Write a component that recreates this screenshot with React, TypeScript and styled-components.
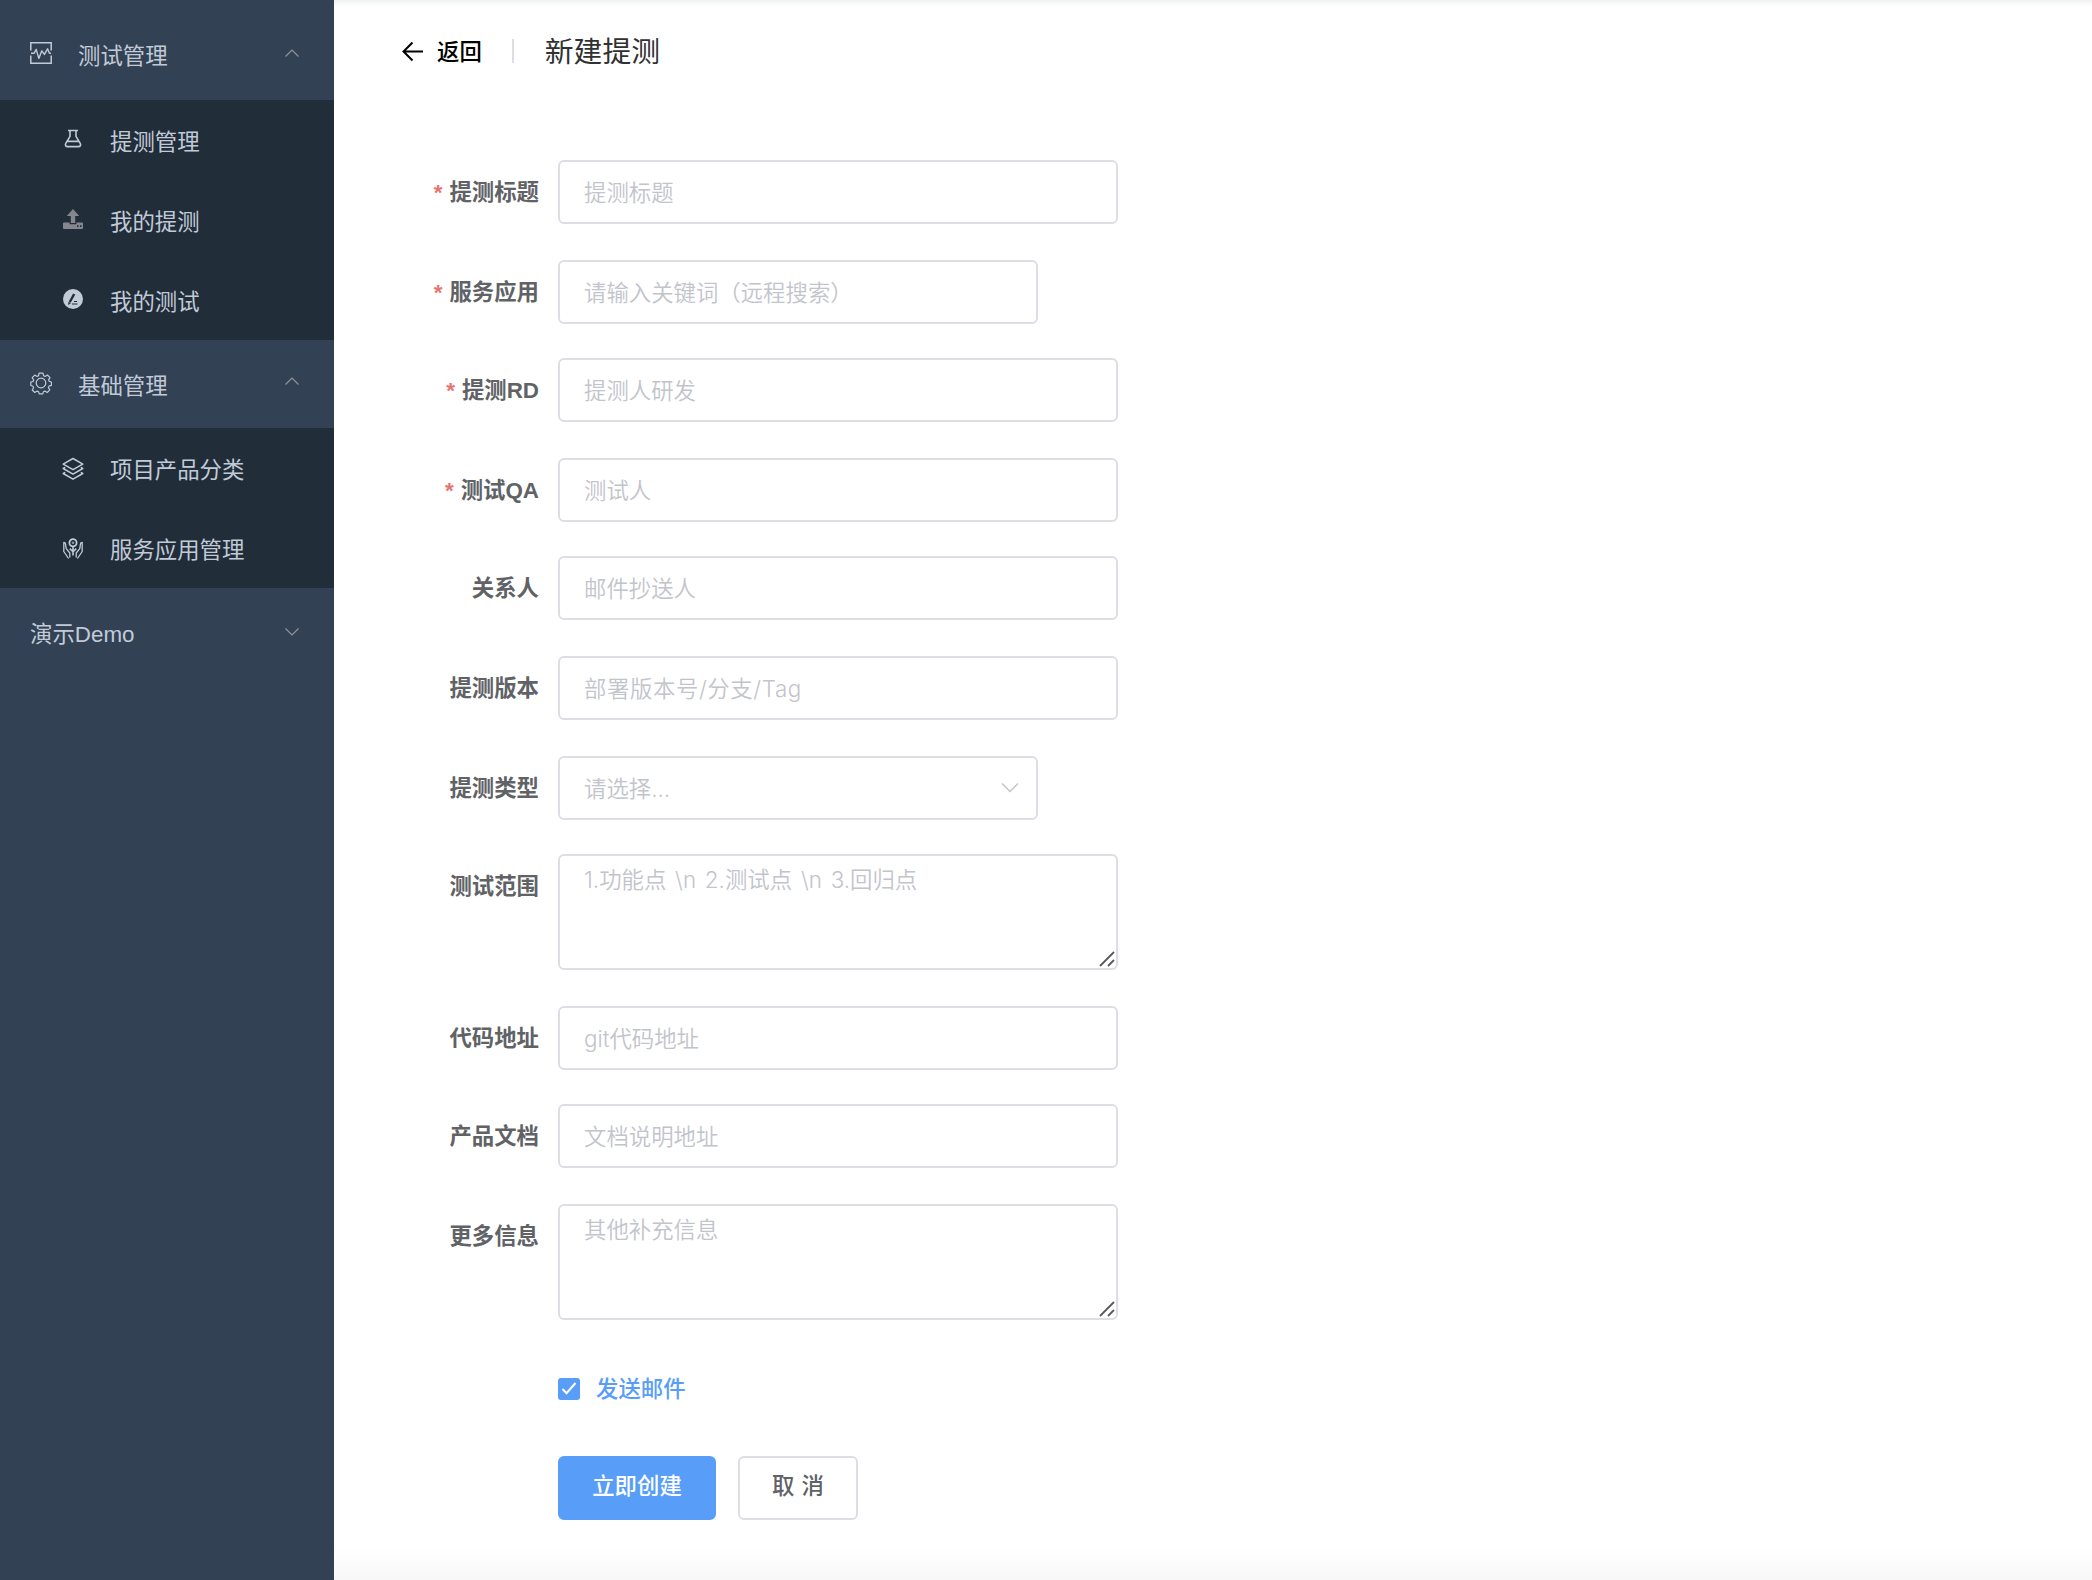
import type { ReactNode } from "react";
import styled, { createGlobalStyle } from "styled-components";

const GlobalStyle = createGlobalStyle`
  * {
    box-sizing: border-box;
  }
  body {
    margin: 0;
    background-color: #ffffff;
    font-family: "Liberation Sans", "Noto Sans CJK SC", sans-serif;
    font-size: 22.4px;
    color: #606266;
  }
`;

const Layout = styled.div`
  display: flex;
  height: 1580px;
  overflow: hidden;
`;

const Sidebar = styled.nav`
  width: 334px;
  flex-shrink: 0;
  padding-top: 12px;
  background-color: #334154;
  color: #c1cbd8;
`;

const GroupTitle = styled.div<{ $plain?: boolean }>`
  display: flex;
  align-items: center;
  height: 88px;
  padding: 0 34px 0 ${(p) => (p.$plain ? 30 : 28)}px;
  cursor: pointer;
`;

const SubMenu = styled.div`
  background-color: #222d3a;
`;

const MenuItem = styled.div`
  display: flex;
  align-items: center;
  height: 80px;
  padding-left: 60px;
  cursor: pointer;
  &:hover {
    background-color: #1b2430;
  }
`;

const IconBox = styled.span<{ $lift?: number }>`
  display: flex;
  width: 26px;
  margin-right: 24px;
  margin-bottom: ${(p) => p.$lift ?? 4}px;
`;

const MenuText = styled.span<{ $drop?: number }>`
  flex: 1;
  line-height: 30px;
  padding-top: ${(p) => p.$drop ?? 6}px;
`;

const Chevron = styled.svg<{ $lift: number }>`
  width: 16px;
  height: 10px;
  margin-bottom: ${(p) => p.$lift}px;
  stroke: #909399;
  stroke-width: 1.2;
  fill: none;
`;

const Main = styled.main`
  flex: 1;
  background:
    linear-gradient(to bottom, #f0f2f2, rgba(255, 255, 255, 0)) top / 100% 7px no-repeat,
    linear-gradient(to bottom, rgba(255, 255, 255, 0), #f8f8f8) bottom / 100% 36px no-repeat,
    #ffffff;
`;

const PageHeader = styled.header`
  display: flex;
  align-items: center;
  height: 104px;
  padding-left: 66px;
`;

const Back = styled.div`
  display: flex;
  align-items: center;
  gap: 13px;
  color: #000000;
  cursor: pointer;
`;

const BackText = styled.span`
  padding-bottom: 4px;
  font-weight: 500;
`;

const Divider = styled.span`
  width: 2px;
  height: 24px;
  margin: 0 31px 2px 30px;
  background-color: #dddee4;
`;

const Title = styled.h1`
  margin: 0;
  font-size: 28.8px;
  font-weight: 400;
  line-height: 40px;
  color: #303133;
`;

const Form = styled.form`
  padding-top: 56px;
`;

const Row = styled.div<{ $gap: number }>`
  display: flex;
  margin-bottom: ${(p) => p.$gap}px;
`;

const Label = styled.label<{ $required?: boolean }>`
  width: 224px;
  height: 64px;
  padding: 1px 19px 0 0;
  line-height: 64px;
  text-align: right;
  font-weight: 700;
  white-space: nowrap;
  &::before {
    content: ${(p) => (p.$required ? '"*"' : "none")};
    margin-right: 7px;
    color: #e47470;
  }
`;

const Field = styled.div<{ $width?: number }>`
  display: flex;
  align-items: center;
  width: ${(p) => p.$width ?? 560}px;
  height: 64px;
  padding-right: 17px;
  border: 2px solid #dddee4;
  border-radius: 6px;
  background-color: #ffffff;
`;

const Input = styled.input<{ $spacing?: number }>`
  flex: 1;
  min-width: 0;
  height: 60px;
  padding: 0 0 0 24px;
  border: none;
  outline: none;
  background: none;
  font-family: Inter, "Noto Sans CJK SC", sans-serif;
  font-size: 22.4px;
  letter-spacing: ${(p) => p.$spacing ?? 0}px;
  color: #606266;
  &::placeholder {
    color: #c2c4cb;
    font-weight: 350;
  }
`;

const TextAreaBox = styled.div`
  position: relative;
  width: 560px;
  height: 116px;
`;

const TextArea = styled.textarea`
  display: block;
  width: 100%;
  height: 100%;
  padding: 7px 24px;
  border: 2px solid #dddee4;
  border-radius: 6px;
  outline: none;
  resize: none;
  font-family: Inter, "Noto Sans CJK SC", sans-serif;
  font-size: 22.4px;
  line-height: 33.6px;
  word-spacing: 2.5px;
  &::placeholder {
    color: #c2c4cb;
    font-weight: 350;
  }
`;

const Grip = styled.svg`
  position: absolute;
  right: 3px;
  bottom: 3px;
  width: 16px;
  height: 16px;
  stroke: #5a5a5a;
  stroke-width: 1.8;
`;

const CheckRow = styled.div`
  display: flex;
  align-items: center;
  gap: 16px;
  height: 64px;
  margin: 37px 0 35px 224px;
  color: #589df8;
`;

const CheckBox = styled.span`
  display: flex;
  width: 22px;
  height: 22px;
  border-radius: 3px;
  background-color: #589df8;
`;

const CheckText = styled.span`
  padding-bottom: 5px;
  font-weight: 500;
`;

const Actions = styled.div`
  display: flex;
  gap: 22px;
  margin-left: 224px;
`;

const Button = styled.button<{ $primary?: boolean }>`
  width: ${(p) => (p.$primary ? 158 : 120)}px;
  height: 64px;
  padding: 0 0 8px;
  border: 2px solid ${(p) => (p.$primary ? "#589df8" : "#dddee4")};
  border-radius: 6px;
  background-color: ${(p) => (p.$primary ? "#589df8" : "#ffffff")};
  color: ${(p) => (p.$primary ? "#ffffff" : "#606266")};
  font: inherit;
  font-weight: 500;
  word-spacing: 1px;
  cursor: pointer;
`;

const Svg = ({ children, width = 1.5 }: { children: ReactNode; width?: number }) => (
  <svg
    width="26"
    height="26"
    viewBox="0 0 26 26"
    fill="none"
    stroke="currentColor"
    strokeWidth={width}
    strokeLinejoin="round"
  >
    {children}
  </svg>
);

const MonitorIcon = () => (
  <Svg>
    <path d="M2.8 10.4V2.8h20.4v7.6M2.8 15.6v7.6h20.4v-7.6" strokeLinejoin="miter" />
    <path d="M3 13.2h3.2l2-3.8 2.6 9 3-7.6 2.6 3.6 3.2-5.6 1.8 4.4H23" strokeWidth="1.4" />
  </Svg>
);

const FlaskIcon = () => (
  <Svg width={1.6}>
    <path d="M8 4.5h10M10 4.5v5.8L5.8 17.4c-1 2 0 3.2 1.8 3.2h10.8c1.8 0 2.8-1.2 1.8-3.2L16 10.3V4.5M7.4 15.4h11.2" />
  </Svg>
);

const UploadIcon = () => (
  <Svg>
    <g fill="#86868f" stroke="none">
      <path d="M13 3l6.2 7h-4v7h-4.4v-7h-4z" />
      <path
        fillRule="evenodd"
        d="M4 16.5h5.6v1.8h6.8v-1.8H22q1 0 1 1v4.5q0 1-1 1H4q-1 0-1-1v-4.5q0-1 1-1zM17 19.2v1.8h1.5v-1.8zM20 19.2v1.8h1.5v-1.8z"
      />
    </g>
  </Svg>
);

const EditIcon = () => (
  <Svg>
    <circle cx="13" cy="13" r="10" fill="currentColor" stroke="none" />
    <g stroke="#222d3a">
      <path d="M14.2 8L9.8 16" strokeWidth="2.4" />
      <path d="M8.5 18.6l.2-2.4 1.8 1z" strokeWidth="0.6" fill="#222d3a" />
      <path d="M14 15.5h3M12 18h5.5" strokeWidth="1.2" />
    </g>
  </Svg>
);

const GearIcon = () => (
  <Svg width={1.2}>
    <path d="M11 3.2h4l.6 2.6 1.5.6 2.3-1.4 2.6 2.6-1.4 2.3.6 1.5 2.2.6v3.4l-2.4.7-.6 1.5 1.4 2.3-2.6 2.6-2.3-1.4-1.5.6-.6 2.2h-3.6l-.6-2.2-1.5-.6-2.3 1.4L4.2 20l1.4-2.3-.6-1.5-2.2-.7v-3.4l2.3-.6.6-1.5-1.5-2.3 2.6-2.6 2.3 1.3 1.5-.6z" />
    <circle cx="13" cy="13" r="4.8" />
  </Svg>
);

const LayersIcon = () => (
  <Svg width={1.5}>
    <path d="M13 2.5l9.8 5.6-9.8 5.6-9.8-5.6zM5.2 11.4l-2 1.1 9.8 5.7 9.8-5.7-2-1.1M5.2 16.4l-2 1.1 9.8 5.7 9.8-5.7-2-1.1" />
  </Svg>
);

const ServiceIcon = () => (
  <Svg width={1.6}>
    <circle cx="13" cy="6.8" r="3.6" strokeWidth="1.8" />
    <circle cx="13" cy="6.8" r="0.8" strokeWidth="0.8" />
    <path d="M13 11v8.500M13 15.800l-3.200-3.200M13 15.800l3.200-3.200" />
    <path
      d="M8.600 22.500L3.800 15.500V6.500q1.600 0 1.700 1.400l.7 4.800 3.600 4.300v4.500M17.400 22.500l4.800-7V6.500q-1.600 0-1.700 1.400l-.7 4.800-3.600 4.300v4.500"
      strokeWidth="1.3"
    />
  </Svg>
);

const groups = [
  {
    title: "测试管理",
    icon: <MonitorIcon />,
    lift: 7,
    iconLift: 7,
    drop: 2,
    items: [
      { name: "提测管理", icon: <FlaskIcon />, lift: 2 },
      { name: "我的提测", icon: <UploadIcon />, lift: 2 },
      { name: "我的测试", icon: <EditIcon />, lift: 2 },
    ],
  },
  {
    title: "基础管理",
    icon: <GearIcon />,
    lift: 6,
    iconLift: 2,
    drop: 6,
    items: [
      { name: "项目产品分类", icon: <LayersIcon />, lift: -2 },
      { name: "服务应用管理", icon: <ServiceIcon />, lift: -2 },
    ],
  },
];

const fields = [
  { label: "提测标题", hint: "提测标题", required: true, gap: 36 },
  { label: "服务应用", hint: "请输入关键词（远程搜索）", required: true, width: 480, gap: 34 },
  { label: "提测RD", hint: "提测人研发", required: true, gap: 36 },
  { label: "测试QA", hint: "测试人", required: true, gap: 34 },
  { label: "关系人", hint: "邮件抄送人", gap: 36 },
  { label: "提测版本", hint: "部署版本号/分支/Tag", spacing: 0.6, gap: 36 },
  { label: "提测类型", hint: "请选择...", width: 480, select: true, gap: 34 },
  { label: "测试范围", hint: "1.功能点 \\n 2.测试点 \\n 3.回归点", area: true, gap: 36 },
  { label: "代码地址", hint: "git代码地址", gap: 34 },
  { label: "产品文档", hint: "文档说明地址", gap: 36 },
  { label: "更多信息", hint: "其他补充信息", area: true, gap: 0 },
];

const App = () => {
  return (
    <>
      <GlobalStyle />
      <Layout>
        <Sidebar>
          {groups.map((group) => (
            <div key={group.title}>
              <GroupTitle>
                <IconBox $lift={group.iconLift}>{group.icon}</IconBox>
                <MenuText $drop={group.drop}>{group.title}</MenuText>
                <Chevron viewBox="0 0 16 10" $lift={group.lift}>
                  <path d="M1.5 8.5L8 2l6.5 6.5" />
                </Chevron>
              </GroupTitle>
              <SubMenu>
                {group.items.map((item) => (
                  <MenuItem key={item.name}>
                    <IconBox $lift={item.lift}>{item.icon}</IconBox>
                    <MenuText>{item.name}</MenuText>
                  </MenuItem>
                ))}
              </SubMenu>
            </div>
          ))}
          <GroupTitle $plain>
            <MenuText>演示Demo</MenuText>
            <Chevron viewBox="0 0 16 10" $lift={1}>
              <path d="M1.5 1.5L8 8l6.5-6.5" />
            </Chevron>
          </GroupTitle>
        </Sidebar>
        <Main>
          <PageHeader>
            <Back>
              <svg width="24" height="22" viewBox="0 0 24 22" fill="none" stroke="#000000" strokeWidth="2">
                <path d="M12.5 1.5L3.5 10.5l9 9M3.5 10.5H23" />
              </svg>
              <BackText>返回</BackText>
            </Back>
            <Divider />
            <Title>新建提测</Title>
          </PageHeader>
          <Form>
            {fields.map((field) => (
              <Row key={field.label} $gap={field.gap}>
                <Label $required={field.required}>{field.label}</Label>
                {field.area ? (
                  <TextAreaBox>
                    <TextArea placeholder={field.hint} />
                    <Grip viewBox="0 0 16 16">
                      <path d="M1 15L15 1M9 15l6-6" />
                    </Grip>
                  </TextAreaBox>
                ) : (
                  <Field $width={field.width}>
                    <Input placeholder={field.hint} $spacing={field.spacing} />
                    {field.select && (
                      <svg width="18" height="12" viewBox="0 0 18 12" fill="none" stroke="#c2c4cb" strokeWidth="1.5">
                        <path d="M1 1.5l8 8 8-8" />
                      </svg>
                    )}
                  </Field>
                )}
              </Row>
            ))}
            <CheckRow>
              <CheckBox>
                <svg width="22" height="22" viewBox="0 0 22 22" fill="none" stroke="#ffffff" strokeWidth="2">
                  <path d="M4.5 11l4 4.2L17.5 5" />
                </svg>
              </CheckBox>
              <CheckText>发送邮件</CheckText>
            </CheckRow>
            <Actions>
              <Button $primary type="button">
                立即创建
              </Button>
              <Button type="button">取 消</Button>
            </Actions>
          </Form>
        </Main>
      </Layout>
    </>
  );
};

export default App;
